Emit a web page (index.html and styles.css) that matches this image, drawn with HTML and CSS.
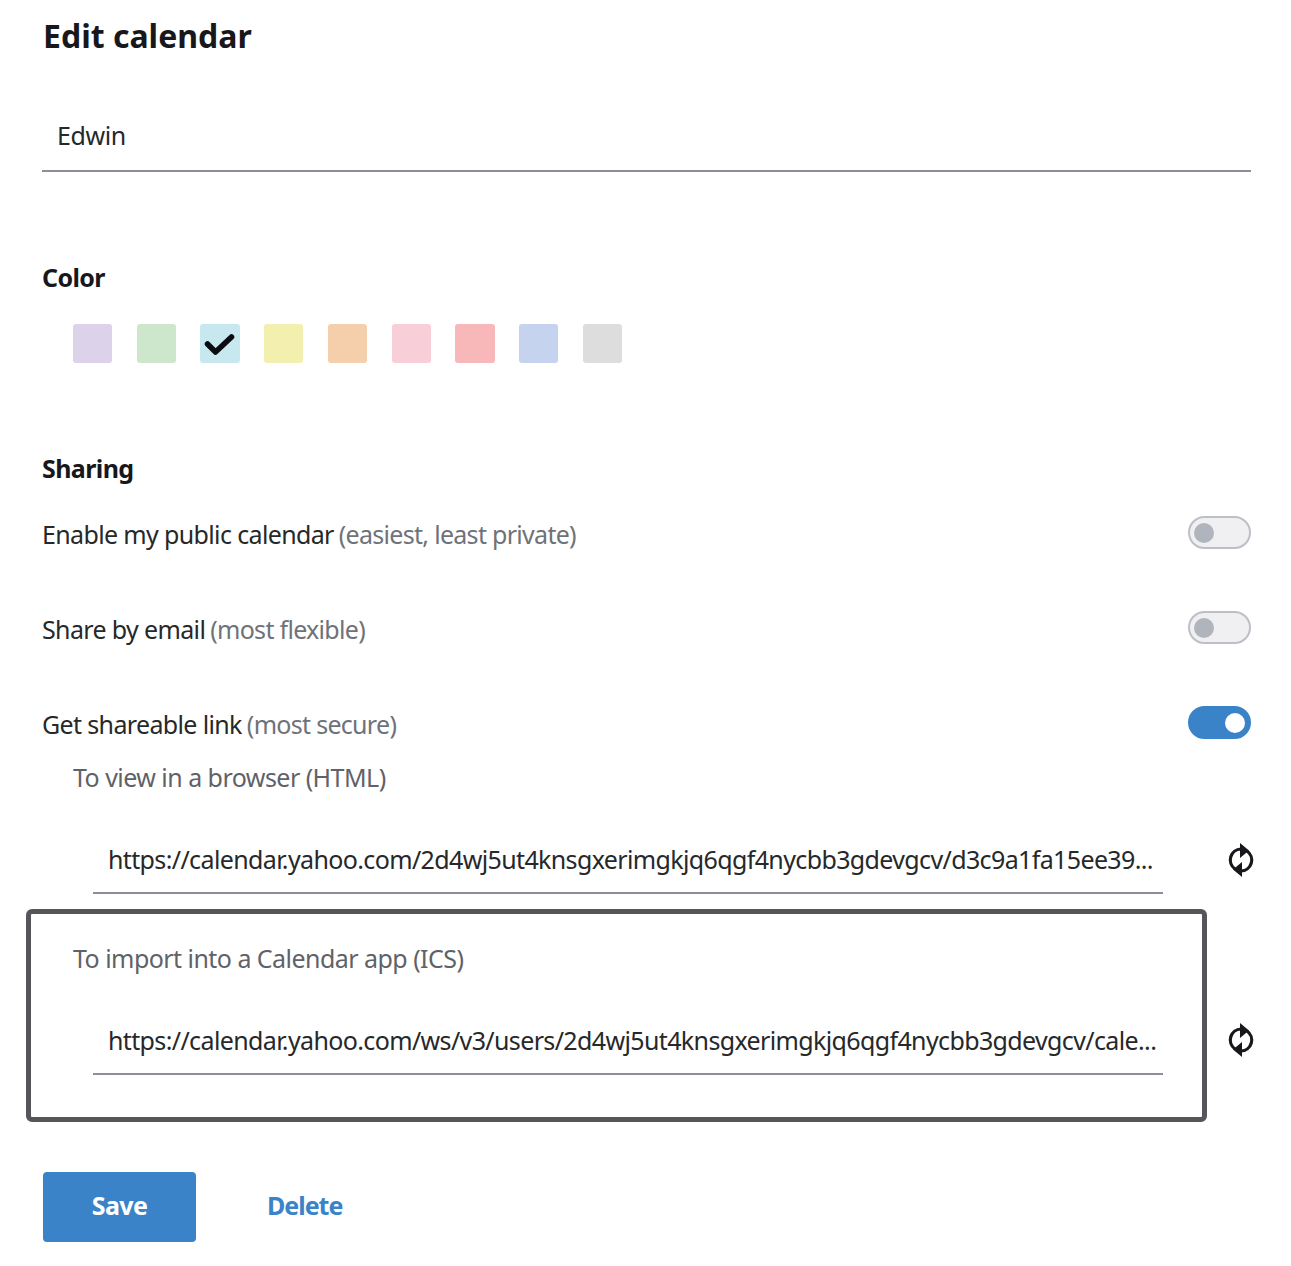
FILE: index.html
```html
<!DOCTYPE html>
<html lang="en">
<head>
<meta charset="utf-8">
<title>Edit calendar</title>
<link rel="stylesheet" href="styles.css">
</head>
<body>
<main class="page">
  <h1 class="title">Edit calendar</h1>
  <div class="name-field">Edwin</div>

  <h2 class="label color-label">Color</h2>
  <div class="swatches">
    <span class="swatch s1"></span>
    <span class="swatch s2"></span>
    <span class="swatch s3"><svg class="check" viewBox="0 0 32 24" width="32" height="24"><path d="M3.500 12 L11.500 20 L27.500 5" fill="none" stroke="#0b0b10" stroke-width="5.500" stroke-linecap="round" stroke-linejoin="round"/></svg></span>
    <span class="swatch s4"></span>
    <span class="swatch s5"></span>
    <span class="swatch s6"></span>
    <span class="swatch s7"></span>
    <span class="swatch s8"></span>
    <span class="swatch s9"></span>
  </div>

  <h2 class="label sharing-label">Sharing</h2>
  <div class="row row-first"><span class="row-text">Enable my public calendar<span class="hint">(easiest, least private)</span></span><span class="toggle"></span></div>
  <div class="row"><span class="row-text">Share by email<span class="hint">(most flexible)</span></span><span class="toggle"></span></div>
  <div class="row"><span class="row-text">Get shareable link<span class="hint">(most secure)</span></span><span class="toggle on"></span></div>

  <div class="link-block view-block">
    <div class="link-title">To view in a browser (HTML)</div>
    <div class="link-url">https://calendar.yahoo.com/2d4wj5ut4knsgxerimgkjq6qgf4nycbb3gdevgcv/d3c9a1fa15ee39...</div>
    <svg class="refresh" viewBox="0 0 28 36" width="28" height="36"><path d="M14 7A11 11 0 0 0 8 27M14 29A11 11 0 0 0 20 9" fill="none" stroke="#17171c" stroke-width="3.200"/><path d="M13 1L22 8.500L13 16zM15 35L6 27.500L15 20z" fill="#17171c"/></svg>
  </div>

  <div class="highlight-wrap">
    <div class="highlight">
      <div class="link-title">To import into a Calendar app (ICS)</div>
      <div class="link-url">https://calendar.yahoo.com/ws/v3/users/2d4wj5ut4knsgxerimgkjq6qgf4nycbb3gdevgcv/cale...</div>
    </div>
    <svg class="refresh" viewBox="0 0 28 36" width="28" height="36"><path d="M14 7A11 11 0 0 0 8 27M14 29A11 11 0 0 0 20 9" fill="none" stroke="#17171c" stroke-width="3.200"/><path d="M13 1L22 8.500L13 16zM15 35L6 27.500L15 20z" fill="#17171c"/></svg>
  </div>

  <div class="actions">
    <button class="save" type="button">Save</button>
    <a class="delete" href="#">Delete</a>
  </div>
</main>
</body>
</html>
```
FILE: styles.css
```css
* { box-sizing: border-box; }
html, body { margin: 0; padding: 0; background: #fff; }
body { font-family: "Noto Sans", "Open Sans", sans-serif; color: #26282a; }
.page { width: 1291px; height: 1266px; padding: 0 40px 0 42px; overflow: hidden; }
.title { margin: 0; padding: 16px 0 0 1px; font-size: 32px; line-height: 40px; font-weight: 700; color: #17171c; }
.name-field { margin-top: 50px; height: 66px; padding: 11px 0 0 15px; font-size: 25px; line-height: 36px; color: #26282a; border-bottom: 2px solid #8d8d9c; letter-spacing: -0.4px; }
.label { margin: 0; font-size: 25px; line-height: 32px; font-weight: 700; color: #17171c; letter-spacing: -0.6px; }
.color-label { margin-top: 89px; }
.swatches { display: flex; gap: 24.550px; margin: 31px 0 0 31px; }
.swatch { width: 39.200px; height: 39px; border-radius: 3px; display: flex; align-items: center; justify-content: center; }
.s1 { background: #dcd2e9; }
.s2 { background: #cde7cd; }
.s3 { background: #c6e8ee; }
.s4 { background: #f3efae; }
.s5 { background: #f5cfab; }
.s6 { background: #f8ced9; }
.s7 { background: #f8b8b9; }
.s8 { background: #c6d3ee; }
.s9 { background: #dddddd; }
.sharing-label { margin-top: 89px; }
.row { display: flex; justify-content: space-between; align-items: center; height: 33px; margin-top: 62px; }
.row-first { margin-top: 32px; }
.row-text { font-size: 25px; line-height: 36px; color: #26282a; position: relative; top: 1px; letter-spacing: -0.64px; }
.hint { color: #6f7278; margin-left: 5px; letter-spacing: -0.7px; }
.toggle { width: 63px; height: 33px; border-radius: 17px; background: #f0f0f3; border: 2px solid #bcbfc6; display: flex; align-items: center; padding-left: 4px; }
.toggle::after { content: ""; width: 20px; height: 20px; border-radius: 50%; background: #b0b4bd; }
.toggle.on { background: #3a83c8; border-color: #3a83c8; justify-content: flex-end; padding: 0 4px 0 0; }
.toggle.on::after { background: #fff; }
.link-block { position: relative; }
.view-block { margin-top: 21px; }
.link-title { font-size: 25px; line-height: 34px; color: #5f6268; padding-left: 31px; letter-spacing: -0.54px; }
.link-url { margin: 48px 0 0 51px; width: 1070px; height: 52px; padding: 0 0 0 15px; font-size: 25px; line-height: 34px; color: #26282a; border-bottom: 2px solid #8d8d9c; white-space: nowrap; letter-spacing: -0.63px; }
.refresh { position: absolute; right: -4px; top: 82px; }
.highlight-wrap { position: relative; margin-top: 15px; }
.highlight { position: relative; margin-left: -16px; width: 1181px; height: 213px; border: 5px solid #54565a; border-radius: 6px; padding-top: 27px; }
.highlight .link-title { padding-left: 42px; }
.highlight .link-url { margin-left: 62px; }
.highlight-wrap .refresh { top: 113px; }
.actions { display: flex; align-items: center; margin: 50px 0 0 1px; }
.save { width: 153px; height: 70px; border: 0; border-radius: 4px; background: #3a83c8; color: #fff; font: 700 25px "Noto Sans", sans-serif; letter-spacing: -0.6px; padding: 0 0 4px; }
.delete { margin-left: 71px; color: #3a83c8; font-size: 25px; font-weight: 700; text-decoration: none; letter-spacing: -1px; position: relative; top: -2px; }
```
